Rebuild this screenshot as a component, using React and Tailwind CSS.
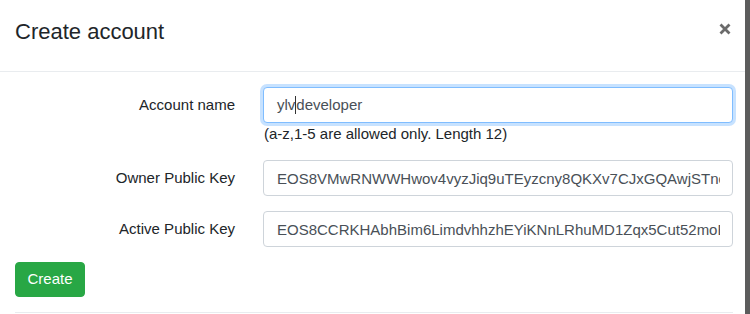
export default function App() {
  const font = { fontFamily: '"Liberation Sans", Arial, sans-serif' };
  return (
    <div className="w-[750px] h-[314px] overflow-hidden flex bg-white" style={font}>
      <div className="w-[745px] h-full bg-white rounded-tr-[4px] flex flex-col">
        <div className="h-[72px] border-b border-[#e9ecef] flex items-center justify-between pl-[15px] pr-[14px] pb-[8px] shrink-0">
          <h4 className="text-[22px] leading-[26px] text-[#212529]">Create account</h4>
          <svg width="12" height="12" viewBox="0 0 12 12" className="mt-[-6px]">
            <path d="M1.5 1.5 L10.5 10.5 M10.5 1.5 L1.5 10.5" stroke="#6b6b6b" strokeWidth="2.8" strokeLinecap="butt" />
          </svg>
        </div>
        <div className="pt-[15px] pl-[15px] pr-[12px] flex flex-col">
          <div className="flex items-start">
            <label className="w-[220px] text-right text-[15px] leading-[36px] text-[#212529] shrink-0">Account name</label>
            <div className="ml-[28px] flex-1 flex flex-col">
              <div className="h-[36px] rounded-[4px] border border-[#80bdff] shadow-[0_0_0_3px_rgba(0,123,255,0.22)] flex items-center pl-[13px] text-[15px] text-[#495057] bg-white">
                <span>ylv</span>
                <span className="inline-block w-[1px] h-[18px] bg-[#333]"></span>
                <span>developer</span>
              </div>
              <div className="text-[15px] leading-[22px] text-[#212529] pl-[1px]">(a-z,1-5 are allowed only. Length 12)</div>
            </div>
          </div>
          <div className="flex items-center mt-[15px]">
            <label className="w-[220px] text-right text-[15px] text-[#212529] shrink-0">Owner Public Key</label>
            <input
              readOnly
              value="EOS8VMwRNWWHwov4vyzJiq9uTEyzcny8QKXv7CJxGQAwjSTncCC5qZ"
              className="ml-[28px] flex-1 min-w-0 h-[36px] rounded-[4px] border border-[#ced4da] pl-[13px] pr-[12px] text-[15px] text-[#495057] bg-white outline-none"
              style={font}
            />
          </div>
          <div className="flex items-center mt-[15px]">
            <label className="w-[220px] text-right text-[15px] text-[#212529] shrink-0">Active Public Key</label>
            <input
              readOnly
              value="EOS8CCRKHAbhBim6LimdvhhzhEYiKNnLRhuMD1Zqx5Cut52moE7wq"
              className="ml-[28px] flex-1 min-w-0 h-[36px] rounded-[4px] border border-[#ced4da] pl-[13px] pr-[12px] text-[15px] text-[#495057] bg-white outline-none"
              style={font}
            />
          </div>
          <div className="mt-[15px]">
            <button className="h-[35px] w-[70px] rounded-[4px] bg-[#28a745] border border-[#28a745] text-white text-[15px]">Create</button>
          </div>
          <div className="mt-[15px] border-t border-[#e9ecef]"></div>
        </div>
      </div>
      <div className="w-[5px] h-full bg-[#5c5c5c]"></div>
    </div>
  );
}
